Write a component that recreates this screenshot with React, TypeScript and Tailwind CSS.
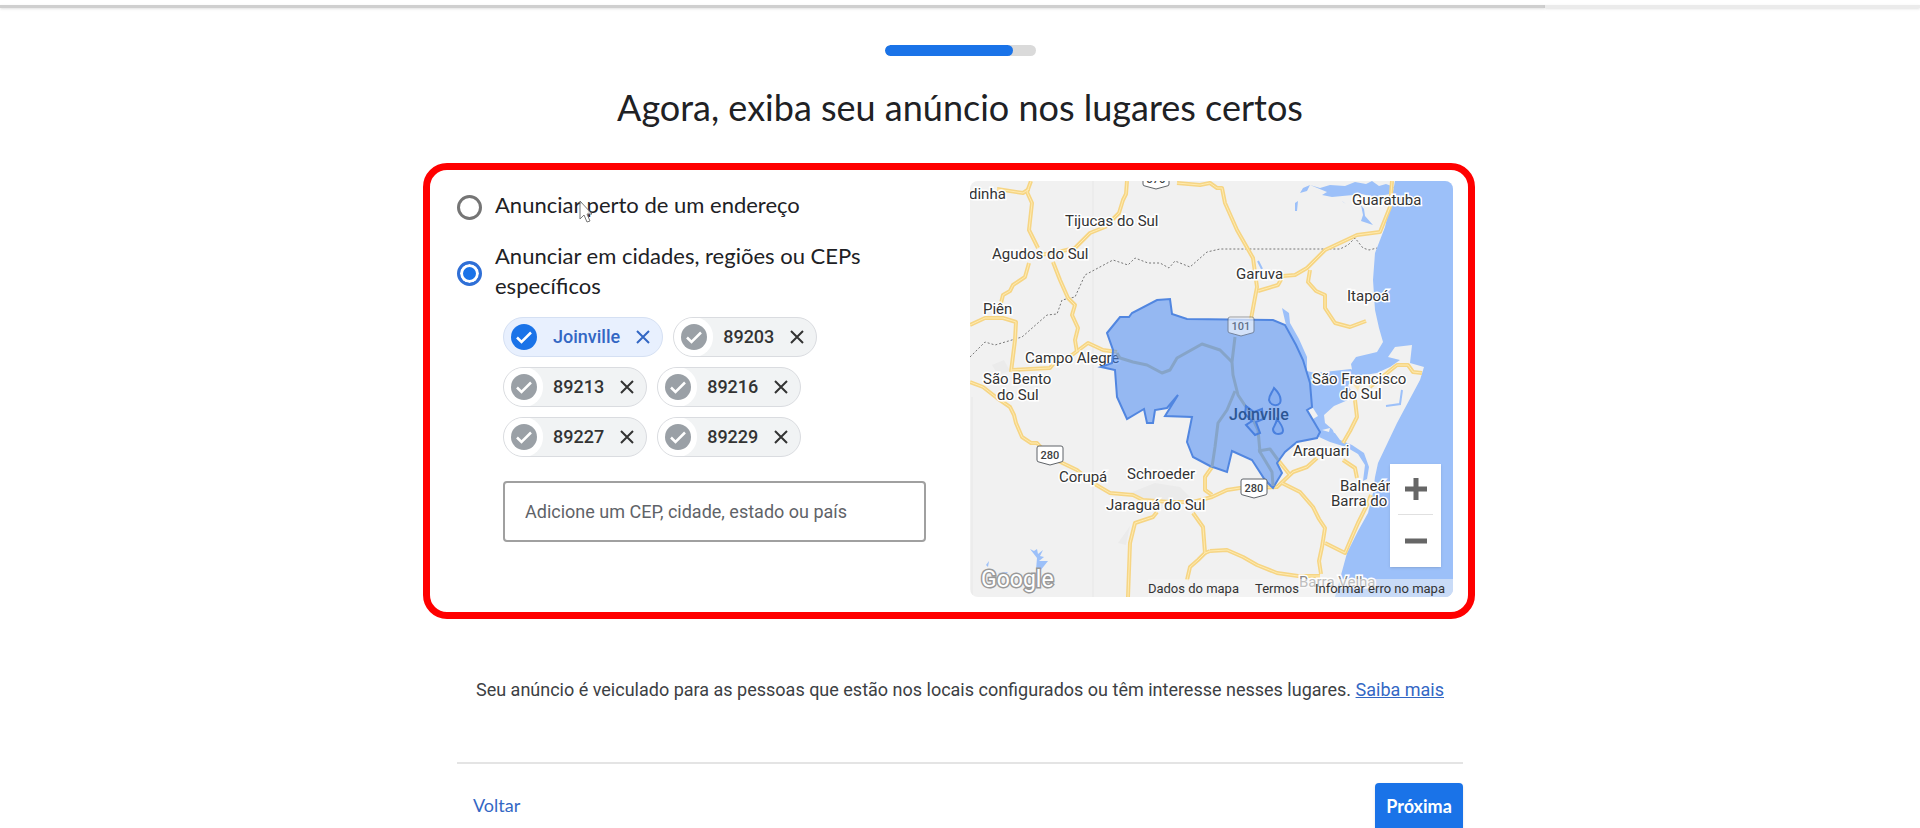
import { useState } from 'react';

type Place = { name: string; active?: boolean };

const initialPlaces: Place[] = [
  { name: 'Joinville', active: true },
  { name: '89203' },
  { name: '89213' },
  { name: '89216' },
  { name: '89227' },
  { name: '89229' },
];

const roads = [
  'M61 0L57 11L62 22L59 49L68 67',
  'M27 8L53 12L59 8',
  'M157 0L156 13L153 19L149 32L135 46L120 52L105 67L88 71L70 74',
  'M59 82L55 96L43 104L40 110L33 114L31 122',
  'M83 81L90 99L98 117L105 124L102 134L108 147L105 159L107 171',
  'M41 189L80 187L84 182L102 174L118 162L133 169L147 171',
  'M0 144L15 137L33 137L46 141L45 159L41 191',
  'M0 201L13 206L27 217L40 226L44 234L46 242L52 256L61 262L67 262L80 276L107 289L123 302L140 312L163 314L173 319L200 321L223 321L242 316L257 309L270 307L307 306L323 291L337 286L347 277',
  'M373 262L380 250L387 236L385 219M400 206L417 192L427 184L438 184L443 191L452 192',
  'M308 279L320 294',
  'M312 302L330 311L343 326L349 338L355 347L352 366L349 380L351 393',
  'M355 362L375 372L381 358L388 342L398 322L401 314',
  'M240 370L257 369L273 376L287 384L307 392L328 395L350 395',
  'M373 279L385 287L387 297',
  'M187 331L183 336L165 342L160 362L158 416',
  'M223 332L233 346L235 372L228 379L220 386L217 399',
  'M235 372L240 370',
  'M242 286L235 296L235 309L242 314',
  'M207 2L230 4L240 2L247 7L252 7L255 22L267 49L283 77L287 106L281 138',
  'M288 110L308 104L313 95L325 94L337 87L355 69L387 54L410 51L420 26L422 0',
  'M340 89L338 101L346 110L355 114L355 127L365 142L380 146L396 140',
];

const coveredRoads = [
  'M147 172L150 177L163 181L177 184L192 192L200 189L207 177L232 163L250 169L262 181',
  'M265 156L262 181L263 194L268 214L280 232L288 249L290 271L302 291L303 305',
  'M265 210L257 229L248 242L245 266L242 286',
  'M288 270L300 268L308 279',
];

const area =
  'M137 152L150 136L159 136L162 132L187 119L200 118L202 133L217 138L303 139L315 144L326 164L333 179L340 202L342 226L337 229L350 251L347 257L327 261L315 271L307 282L312 292L303 307L295 299L282 279L262 270L257 291L240 285L223 276L217 261L222 236L195 235L208 214L197 227L185 229L183 242L177 242L174 228L157 238L147 216L145 189L131 186L142 182L143 169Z';

const labels = [
  { text: 'dinha', x: -1, y: 18 },
  { text: 'Tijucas do Sul', x: 95, y: 45 },
  { text: 'Agudos do Sul', x: 22, y: 78 },
  { text: 'Piên', x: 13, y: 133 },
  { text: 'São Bento', x: 13, y: 203 },
  { text: 'do Sul', x: 27, y: 219 },
  { text: 'Corupá', x: 89, y: 301 },
  { text: 'Schroeder', x: 157, y: 298 },
  { text: 'Jaraguá do Sul', x: 136, y: 329 },
  { text: 'Guaratuba', x: 382, y: 24 },
  { text: 'Garuva', x: 266, y: 98 },
  { text: 'Itapoá', x: 377, y: 120 },
  { text: 'São Francisco', x: 342, y: 203 },
  { text: 'do Sul', x: 370, y: 218 },
  { text: 'Araquari', x: 323, y: 275 },
  { text: 'Balneár', x: 370, y: 310 },
  { text: 'Barra do', x: 361, y: 325 },
];

function Shield({ x, y, label }: { x: number; y: number; label: string }) {
  return (
    <g transform={`translate(${x} ${y})`}>
      <path d="M2 0H24Q26 0 26 2V14Q26 16 24 16L13 19L2 16Q0 16 0 14V2Q0 0 2 0Z" fill="#fff" stroke="#5f6368" />
      <text x="13" y="13" textAnchor="middle" className="fill-[#3c4043] text-[11px] font-medium">{label}</text>
    </g>
  );
}

function MapDrawing() {
  return (
    <svg viewBox="0 0 483 416" className="block w-full" role="img" aria-label="Mapa de Joinville">
      <rect width="483" height="416" fill="#f1f1f1" />
      <path d="M160 312L185 302L210 306L222 318L190 328L172 322ZM148 362L160 345L156 364ZM22 184L34 179L40 190L28 194Z" fill="#ebebeb" />
      <path d="M123 0V416M2 216V416" stroke="#e7e7e7" />

      {/* sea, bays and rivers */}
      <g fill="#9cc0f9">
        <path d="M425 0H483V416H365L377 372L388 350L398 332L403 312L405 296L408 282L427 242L450 199L454 186L440 182L442 164L425 166L418 176L430 179L420 186L407 192L395 194L383 194L381 183L386 176L407 171L413 161L409 147L405 129L403 99L405 72L415 46L422 16Z" />
        <path d="M340 4L357 11L352 14L362 16L383 14L392 13L404 16L420 13L424 6L416 3L409 5L402 0L396 3L385 1L375 5L360 4L350 7ZM330 12L333 7L340 4L337 10Z" />
        <path d="M325 22L328 20L327 30L325 30ZM391 24L394 28L395 35L403 44L391 40L393 34ZM372 20L376 23L373 21Z" />
        <path d="M312 127L319 132L320 142L329 158L337 176L337 190L345 192L381 188L390 195L378 204L384 215L378 219L364 225L354 234L355 242L362 248L370 259L382 264L394 272L399 286L397 298L393 300L395 284L388 273L376 266L360 261L349 256L350 251L338 229L342 226L340 202L333 179L316 144Z" />
        <path d="M60 368L64 370L67 368L68 373L73 369L70 375L74 376L69 380L78 380L70 390L66 389L67 377ZM16 384L19 380L18 386ZM28 392L38 391L34 395Z" />
      </g>
      <path d="M288 80L292 88M416 225L430 223L432 209" fill="none" stroke="#9cc0f9" strokeWidth="2" />
      <path d="M337 229L343 227L348 235L343 238ZM352 249L360 247L359 251ZM363 249L368 251L364 252Z" fill="#f1f1f1" />
      <path d="M382 202L392 198L388 210Z" fill="#fbe8b4" />

      <path
        d="M0 176L15 161L25 164L52 156L77 134L87 133L92 119L105 116L115 94L143 79L158 84L165 77L178 82L190 82L199 87L205 80L220 86L237 71L250 68H370L378 64L385 57L393 67L399 69L407 67"
        fill="none"
        stroke="#777"
        strokeWidth="1"
        strokeDasharray="2 2"
      />

      <g fill="none" strokeLinejoin="round">
        {roads.map(d => <path key={d} d={d} stroke="#f6d584" strokeWidth="4" />)}
        {roads.map(d => <path key={d} d={d} stroke="#ffebb0" strokeWidth="1" />)}
      </g>

      <text x="55" y="182" className="fill-[#333] stroke-white stroke-3 text-[15px] [paint-order:stroke]">Campo Alegre</text>

      <path d={area} fill="#4285f4" fillOpacity="0.52" stroke="#5186e0" strokeWidth="2" />
      <g fill="none" stroke="#86a4c8" strokeWidth="3" strokeLinejoin="round">
        {coveredRoads.map(d => <path key={d} d={d} />)}
      </g>
      <path
        d="M304 207C308 211 312 217 310 222C307 226 300 224 299 219C299 214 302 212 304 207ZM307 238C311 243 315 249 312 252C308 254 303 253 303 248C304 245 306 243 307 238ZM276 225L284 231L292 228L293 238L286 241L290 252L285 254L276 244L282 240L275 233Z"
        fill="#5a91ee"
        fillOpacity="0.2"
        stroke="#4a80de"
        strokeWidth="2"
      />
      <text x="259" y="239" className="fill-[#2c5694] text-base font-medium">Joinville</text>

      <g opacity="0.6">
        <Shield x={258} y={136} label="101" />
      </g>
      <Shield x={67} y={265} label="280" />
      <Shield x={271} y={298} label="280" />
      <Shield x={173} y={-11} label="376" />

      <g className="fill-[#333] stroke-white stroke-3 text-[15px] [paint-order:stroke]">
        {labels.map(({ text, x, y }) => <text key={`${text}${x}`} x={x} y={y}>{text}</text>)}
      </g>
      <text x="329" y="406" className="fill-[#888] stroke-white stroke-3 text-[15px] [paint-order:stroke]">Barra Velha</text>
      <rect x="178" y="398" width="305" height="18" fill="#f5f5f5" fillOpacity="0.5" />
      <text x="11" y="406" className="fill-white stroke-[#999] stroke-3 text-[23px] [paint-order:stroke]">Google</text>
    </svg>
  );
}

function LocationMap() {
  return (
    <div className="relative w-[483px] shrink-0 self-start overflow-hidden rounded-lg">
      <MapDrawing />
      <div className="absolute right-2 bottom-0 flex gap-4 text-[13px] leading-4 text-[#333]">
        <span>Dados do mapa</span>
        <a href="#termos">Termos</a>
        <a href="#erro">Informar erro no mapa</a>
      </div>
      <div className="absolute right-3 bottom-[30px] w-[51px] bg-white px-2 shadow">
        <button type="button" aria-label="Aumentar zoom" className="flex h-[51px] w-full items-center justify-center border-b border-[#e0e0e0]">
          <svg viewBox="0 0 22 22" className="size-[22px]" stroke="#666" strokeWidth="5"><path d="M11 0V22M0 11H22" /></svg>
        </button>
        <button type="button" aria-label="Diminuir zoom" className="flex h-[52px] w-full items-center justify-center">
          <svg viewBox="0 0 22 22" className="size-[22px]" stroke="#666" strokeWidth="5"><path d="M0 11H22" /></svg>
        </button>
      </div>
    </div>
  );
}

function Chip({ place, onRemove }: { place: Place; onRemove: () => void }) {
  return (
    <li
      className={`flex h-10 items-center overflow-hidden rounded-full border pr-3 text-lg font-medium ${
        place.active ? 'border-[#d5e0f3] bg-[#e8f0fe] text-[#3367c4]' : 'border-[#dadce0] bg-[#f1f3f4] text-[#333]'
      }`}
    >
      <span className={`flex h-10 w-[39px] items-center rounded-full pl-[7px] ${place.active ? '' : 'bg-white'}`}>
        <svg viewBox="0 0 26 26" className="size-[26px]">
          <circle cx="13" cy="13" r="13" fill={place.active ? '#1a73e8' : '#9aa0a6'} />
          <path d="M6 13.500L10.500 18L20 8.500" fill="none" stroke="#fff" strokeWidth="2.500" />
        </svg>
      </span>
      <span className="ml-[10px]">{place.name}</span>
      <button type="button" aria-label={`Remover ${place.name}`} onClick={onRemove} className="ml-4">
        <svg viewBox="0 0 14 14" className="size-[14px]" stroke="currentColor" strokeWidth="2"><path d="M1 1L13 13M13 1L1 13" /></svg>
      </button>
    </li>
  );
}

const radioStyle =
  'size-[25px] shrink-0 appearance-none rounded-full border-[3px] border-[#757575] bg-white checked:border-[#2f6fd6] checked:bg-[#1a73e8] checked:shadow-[inset_0_0_0_3px_white]';

export default function App() {
  const [mode, setMode] = useState('places');
  const [places, setPlaces] = useState(initialPlaces);

  return (
    <div className="min-h-screen overflow-x-hidden bg-white font-[Roboto,sans-serif] text-[#202124]">
      <header className="flex h-2 pt-[5px]">
        <div className="h-[3px] grow bg-[#cfcfcf] shadow-sm" />
        <div className="h-[3px] w-[375px] bg-[#ebebeb] shadow-sm" />
      </header>

      <main className="mx-auto flex w-full max-w-[1006px] flex-col">
        <div className="mx-auto mt-[37px] h-[11px] w-[151px] overflow-hidden rounded-full bg-[#dadada]" role="progressbar" aria-label="Progresso" aria-valuenow={85}>
          <div className="h-full rounded-full bg-[#1a73e8]" style={{ width: '85%' }} />
        </div>

        <h1 className="mt-[27px] text-center font-[Lato,sans-serif] text-4xl leading-12">Agora, exiba seu anúncio nos lugares certos</h1>

        <section className="mt-8 -mr-3 -ml-[34px] flex rounded-3xl border-[7px] border-[#ff0000] pt-[11px] pr-[15px] pb-[15px] pl-[27px]">
          <div className="min-w-0 grow pt-[11px] pr-11">
            <div className="relative flex flex-col gap-[21px] font-[Lato,sans-serif] text-[22px] leading-[30px]">
              <label className="flex items-center gap-[13px]">
                <input type="radio" name="mode" className={radioStyle} checked={mode === 'address'} onChange={() => setMode('address')} />
                <span className="-mt-0.5 mb-0.5">Anunciar perto de um endereço</span>
              </label>
              <label className="flex items-center gap-[13px]">
                <input type="radio" name="mode" className={radioStyle} checked={mode === 'places'} onChange={() => setMode('places')} />
                <span className="-mt-0.5 mb-0.5 max-w-[400px]">Anunciar em cidades, regiões ou CEPs específicos</span>
              </label>
              {/* mouse pointer */}
              <svg viewBox="0 0 14 23" className="absolute top-2 left-[122px] h-[23px] w-[14px]" fill="#fff" fillOpacity="0.8" stroke="#777">
                <path d="M1 1V19L5 15L8 22L11 21L8 14H13Z" />
              </svg>
            </div>

            <div className="ml-[46px]">
              <ul className="mt-[14px] flex flex-wrap gap-[10px]">
                {places.map(place => (
                  <Chip key={place.name} place={place} onRemove={() => setPlaces(places.filter(p => p !== place))} />
                ))}
              </ul>
              <input
                type="text"
                aria-label="Adicione um CEP, cidade, estado ou país"
                placeholder="Adicione um CEP, cidade, estado ou país"
                className="mt-6 h-[61px] w-full rounded-sm border-2 border-[#a0a0a0] px-5 text-lg placeholder:text-[#5f6368]"
              />
            </div>
          </div>
          <LocationMap />
        </section>

        <p className="mt-[57px] text-center text-lg leading-7 text-[#3c4043]">
          Seu anúncio é veiculado para as pessoas que estão nos locais configurados ou têm interesse nesses lugares.{' '}
          <a href="#saiba-mais" className="text-[#3367c4] underline">Saiba mais</a>
        </p>

        <div className="mt-[58px] flex items-start justify-between border-t-2 border-[#e4e4e4] pt-[19px] font-[Lato,sans-serif] text-lg">
          <button type="button" className="h-11 px-4 text-[#3367c4]">Voltar</button>
          <button type="button" className="h-[45px] w-[88px] rounded-t bg-[#1a73e8] font-bold text-white shadow">Próxima</button>
        </div>
      </main>
    </div>
  );
}
